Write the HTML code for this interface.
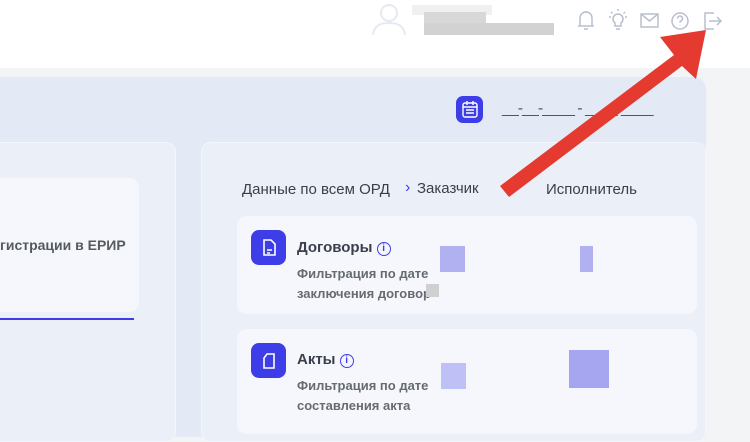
<!DOCTYPE html>
<html><head><meta charset="utf-8"><style>
*{margin:0;padding:0;box-sizing:border-box}
body{width:750px;height:430px;overflow:hidden;background:#f3f4f6;font-family:"Liberation Sans",sans-serif;position:relative}
.abs{position:absolute}
.hdr{left:0;top:0;width:750px;height:68px;background:#fff}
.main{left:0;top:77px;width:706px;height:360px;background:#e4eaf5;border-top-right-radius:12px}
.card{background:#ebf0f8;border:1px solid #f2f5fb;border-radius:10px}
.sub{background:#f5f7fc;border-radius:10px}
.ic{width:35px;height:35px;background:#3d3ee8;border-radius:8px}
.t{color:#3a3f4a;font-weight:bold}
.g{color:#666b73;font-size:13px;font-weight:bold;line-height:20px}
.px{background:#b1b1f2}
</style></head><body>
<div class="abs hdr"></div>
<svg class="abs" style="left:369px;top:2px" width="40" height="34" viewBox="0 0 40 34"><circle cx="20" cy="11" r="8" fill="none" stroke="#e6e9f0" stroke-width="2"/><path d="M4 33 C5 23 12 21 20 21 C28 21 35 23 36 33" fill="none" stroke="#e6e9f0" stroke-width="2"/></svg>
<div class="abs" style="left:412px;top:5px;width:80px;height:10px;background:#f0f0f0"></div>
<div class="abs" style="left:424px;top:12px;width:62px;height:12px;background:#d8d8d8"></div>
<div class="abs" style="left:424px;top:23px;width:130px;height:12px;background:#d2d2d2"></div>
<svg class="abs" style="left:575px;top:8px" width="150" height="26" viewBox="0 0 150 26" fill="none" stroke="#b7bfcf" stroke-width="1.5">
<path d="M5 18 V10 a6 6 0 0 1 12 0 V18 H3 H19 M9 21 h4 M11 3 v1"/>
<path d="M40 15 a5 5 0 1 1 6 0 v3 h-6z M41 21 h4 M34 9 h2 M50 9 h2 M36 4 l1.5 1.5 M50 4 l-1.5 1.5 M43 1 v2"/>
<rect x="66" y="6" width="17" height="13"/><path d="M66 6 l8.5 7 l8.5 -7"/>
<circle cx="105" cy="13" r="8"/><path d="M102.5 10.5 a2.5 2.5 0 1 1 3.5 2.3 c-1 .5 -1 1 -1 2 M105 17 v.5"/>
<path d="M138 6 v-1 h-8 v16 h8 v-1 M134 13 h12 M142 9 l4 4 l-4 4"/>
</svg>
<div class="abs main"></div>
<div class="abs ic" style="left:456px;top:96px;width:27px;height:27px;border-radius:7px"></div>
<svg class="abs" style="left:461px;top:100px" width="18" height="19" viewBox="0 0 18 19" fill="none" stroke="#fff" stroke-width="1.4"><rect x="2" y="3" width="14" height="14" rx="2"/><path d="M2 7 h14 M6 1 v4 M12 1 v4 M5 10 h8 M5 13 h8"/></svg>
<div class="abs" style="left:502px;top:100px;color:#555;font-size:16px;letter-spacing:-1px">__-__-____ - ____-____</div>
<div class="abs card" style="left:-10px;top:142px;width:186px;height:300px"></div>
<div class="abs sub" style="left:-10px;top:178px;width:149px;height:134px"></div>
<div class="abs g" style="left:0;top:235px;color:#555a62;font-size:14px">гистрации в ЕРИР</div>
<div class="abs" style="left:0;top:318px;width:134px;height:2px;background:#3d3ee8"></div>
<div class="abs card" style="left:201px;top:142px;width:505px;height:300px"></div>
<div class="abs" style="left:242px;top:181px;font-size:15px;color:#3a3f4a">Данные по всем ОРД</div>
<div class="abs" style="left:405px;top:179px;font-size:16px;color:#3d3ee8">›</div>
<div class="abs" style="left:417px;top:180px;font-size:15px;color:#3a3f4a">Заказчик</div>
<div class="abs" style="left:546px;top:181px;font-size:15px;color:#3a3f4a">Исполнитель</div>
<div class="abs sub" style="left:237px;top:216px;width:460px;height:98px"></div>
<div class="abs sub" style="left:237px;top:329px;width:460px;height:105px"></div>
<div class="abs ic" style="left:251px;top:230px"></div>
<div class="abs ic" style="left:251px;top:343px"></div>
<svg class="abs" style="left:259px;top:238px" width="20" height="20" viewBox="0 0 20 20" fill="none" stroke="#fff" stroke-width="1.6"><path d="M5 2 h7 l4 4 v11 h-11z M8 12 h5 M8 15 h3"/></svg>
<svg class="abs" style="left:259px;top:351px" width="20" height="20" viewBox="0 0 20 20" fill="none" stroke="#fff" stroke-width="1.6"><path d="M8 3 h7 v14 h-10 v-10z"/></svg>
<div class="abs t" style="left:297px;top:239px;font-size:15px">Договоры <span style="display:inline-block;width:14px;height:14px;border:1.5px solid #3d3ee8;border-radius:50%;color:#3d3ee8;font-size:10px;text-align:center;line-height:11px;vertical-align:1px">i</span></div>
<div class="abs g" style="left:297px;top:264px">Фильтрация по дате<br>заключения договор</div>
<div class="abs t" style="left:297px;top:351px;font-size:15px">Акты <span style="display:inline-block;width:14px;height:14px;border:1.5px solid #3d3ee8;border-radius:50%;color:#3d3ee8;font-size:10px;text-align:center;line-height:11px;vertical-align:1px">i</span></div>
<div class="abs g" style="left:297px;top:376px">Фильтрация по дате<br>составления акта</div>
<div class="abs px" style="left:440px;top:246px;width:25px;height:26px"></div>
<div class="abs px" style="left:580px;top:246px;width:13px;height:26px"></div>
<div class="abs" style="left:426px;top:284px;width:13px;height:13px;background:#d0d0d0"></div>
<div class="abs px" style="left:441px;top:363px;width:25px;height:26px;opacity:.8"></div>
<div class="abs px" style="left:569px;top:350px;width:40px;height:38px;background:#a5a5f0"></div>
<svg class="abs" style="left:0;top:0" width="750" height="430"><polygon points="500,186 509,197 682,66 696,79 706,30 660,37 674,55" fill="#e53a30"/></svg>
</body></html>
